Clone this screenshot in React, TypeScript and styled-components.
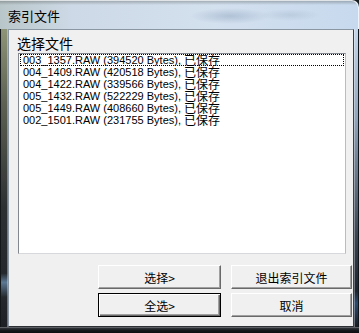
import React from "react";
import styled, { createGlobalStyle } from "styled-components";

const Global = createGlobalStyle`
  html, body { margin: 0; padding: 0; background: #1c1f22; overflow: hidden; }
  #root { width: 359px; height: 333px; }
`;

const CJK = `"Noto Sans CJK SC", "Noto Sans CJK JP", sans-serif`;
const UI = `"Liberation Sans", "Noto Sans CJK SC", sans-serif`;

const Window = styled.div`
  width: 359px;
  height: 333px;
  display: flex;
  flex-direction: column;
  background: #1c1f22;
`;

const TitleBar = styled.div`
  height: 29px;
  flex: none;
  display: flex;
  align-items: center;
  padding-left: 8px;
  box-sizing: border-box;
  border-top-right-radius: 7px;
  background:
    radial-gradient(ellipse 40px 8px at 230px 16px, rgba(150, 170, 195, 0.55), transparent),
    radial-gradient(ellipse 30px 6px at 290px 15px, rgba(160, 180, 200, 0.4), transparent),
    linear-gradient(180deg, rgba(40, 45, 40, 0.35) 0px, rgba(40, 45, 40, 0) 5px),
    linear-gradient(90deg, #b9c6c9 0%, #cdd9e6 20%, #d3e0ee 60%, #c7d9ee 100%);
  box-shadow: inset -1px 1px 0 rgba(255, 255, 255, 0.7);
`;

const Title = styled.span`
  font-family: ${CJK};
  font-size: 13px;
  line-height: 16px;
  color: #000;
  padding-top: 3px;
`;

const Middle = styled.div`
  flex: 1;
  display: flex;
  min-height: 0;
`;

const SideFrame = styled.div<{ $w: number; $right?: boolean }>`
  width: ${(p) => p.$w}px;
  flex: none;
  background: ${(p) =>
    p.$right
      ? "linear-gradient(180deg, #c5d7ec 0%, #8fa3ba 30%, #3a4350 70%, #1d2430 88%, #2c4a6e 92%, #1a1d22 100%)"
      : "linear-gradient(180deg, #8d9476 0%, #5c6152 25%, #2d3033 60%, #25292d 82%, #5d7894 85%, #25292d 90%, #1d2024 100%)"};
  box-shadow: ${(p) =>
    p.$right
      ? "inset 1px 0 0 rgba(255,255,255,0.35), inset -1px 0 0 #10151a"
      : "inset 1px 0 0 #14171a, inset -1px 0 0 rgba(255,255,255,0.35)"};
`;

const Client = styled.div`
  flex: 1;
  display: flex;
  flex-direction: column;
  background: #f0f0f0;
  border: 1px solid #8b96a3;
  border-right-color: #3b4048;
  border-bottom-color: #2d3136;
  min-width: 0;
`;

const Label = styled.div`
  margin: 5px 0 2px 8px;
  height: 16px;
  font-family: ${CJK};
  font-size: 14px;
  line-height: 16px;
  color: #000;
`;

const ListBox = styled.div`
  margin-left: 9px;
  width: 328px;
  height: 201px;
  box-sizing: border-box;
  background: #fff;
  border: 1px solid #828790;
  border-right-color: #b9bdc3;
  border-bottom-color: #d6d8db;
  padding: 0 1px;
  flex: none;
`;

const Item = styled.div<{ $focus?: boolean }>`
  height: 12px;
  box-sizing: border-box;
  border: 1px dotted ${(p) => (p.$focus ? "#000" : "transparent")};
  padding-left: 2px;
  font-family: ${UI};
  font-size: 11px;
  line-height: 10px;
  color: #000;
  white-space: nowrap;
  display: flex;
  align-items: center;
  overflow: visible;
`;

const Han = styled.span`
  font-family: ${CJK};
  font-size: 12px;
  line-height: 10px;
`;

const Spacer = styled.div`
  flex: 1;
`;

const Buttons = styled.div`
  margin: 11px 0 9px 89px;
  display: grid;
  grid-template-columns: 123px 121px;
  grid-auto-rows: 24px;
  column-gap: 10px;
  row-gap: 4px;
`;

const Button = styled.button<{ $default?: boolean }>`
  all: unset;
  box-sizing: border-box;
  display: flex;
  align-items: center;
  justify-content: center;
  background: #f0f0f0;
  font-family: ${CJK};
  font-size: 12px;
  color: #000;
  border: 1px solid;
  border-color: ${(p) => (p.$default ? "#000" : "#fff #696969 #696969 #fff")};
  box-shadow: ${(p) =>
    p.$default
      ? "inset 1px 1px 0 #fff, inset -1px -1px 0 #696969, inset -2px -2px 0 #a0a0a0"
      : "inset -1px -1px 0 #a0a0a0"};
`;

const BottomFrame = styled.div`
  height: 6px;
  flex: none;
  background: linear-gradient(180deg, #3a3f45 0%, #141619 60%, #0d0e10 100%);
  box-shadow: inset 0 1px 0 rgba(255, 255, 255, 0.2);
`;

const files = [
  ["003_1357.RAW", "394520"],
  ["004_1409.RAW", "420518"],
  ["004_1422.RAW", "339566"],
  ["005_1432.RAW", "522229"],
  ["005_1449.RAW", "408660"],
  ["002_1501.RAW", "231755"],
];

export default function App() {
  return (
    <>
      <Global />
      <Window>
        <TitleBar>
          <Title>索引文件</Title>
        </TitleBar>
        <Middle>
          <SideFrame $w={8} />
          <Client>
            <Label>选择文件</Label>
            <ListBox>
              {files.map(([name, size], i) => (
                <Item key={name} $focus={i === 0}>
                  {name} ({size} Bytes),&nbsp;<Han>已保存</Han>
                </Item>
              ))}
            </ListBox>
            <Spacer />
            <Buttons>
              <Button>选择&gt;</Button>
              <Button>退出索引文件</Button>
              <Button $default>全选&gt;</Button>
              <Button>取消</Button>
            </Buttons>
          </Client>
          <SideFrame $w={5} $right />
        </Middle>
        <BottomFrame />
      </Window>
    </>
  );
}
